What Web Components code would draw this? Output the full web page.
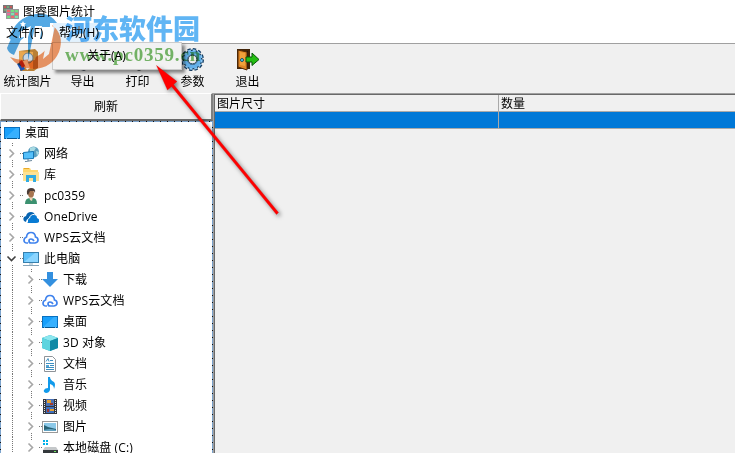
<!DOCTYPE html>
<html lang="zh-CN">
<head>
<meta charset="utf-8">
<title>图睿图片统计</title>
<style>
  html, body { margin: 0; height: 100%; overflow: hidden; background: #f0f0f0; }
</style>
</head>
<body>
<stat-app></stat-app>
<script>
const ICONS = {
  desktop: `<rect x=".5" y="2.500" width="15" height="11" fill="#18a0fb" stroke="#0870c0"/><path d="M1 13L12 3h3v10z" fill="#36b0ff"/><path d="M1 13.500h14" stroke="#075891"/><path d="M2 13.500h1M13 13.500h1" stroke="#6fb8ee"/>`,
  network: `<circle cx="10.500" cy="6" r="5.500" fill="#5c9fbe"/><path d="M7 2q4-2 6 0l-2 3-4 1zM13 5l3 1-2 4z" fill="#a8dbe3"/><path d="M.5 6.500l10-1v7l-10 .5z" fill="#55c0fa" stroke="#1677b5"/><path d="M5 13v2M2 15.500l7-1" stroke="#6e8ba0" stroke-width="1.200"/>`,
  library: `<path d="M0 1h7l1 2h7v10H0z" fill="#ffd76e"/><path d="M1 1.500h5" stroke="#e8a92e"/><path d="M0 5h16v9H0z" fill="#ffe292"/><path d="M3 15V8h10v7h-3v-4H6v4z" fill="#32ace2"/>`,
  user: `<path d="M2 16q0-6 5-6h3q4 0 4 6z" fill="#3c9170"/><path d="M6 9h4l-1 4-2-1z" fill="#ead2b5"/><ellipse cx="8" cy="5.500" rx="3" ry="4" fill="#a77550"/><path d="M4 6q-1-6 4-6 5 0 4 5l-1-2-4 0-2 4z" fill="#4b3c36"/>`,
  onedrive: `<path d="M1 12q-2-4 2-5 1-4 5-4 3 0 4 3-5-1-6 4-3 0-3 3z" fill="#0864b1"/><path d="M5 14q-3-3 1-5 1-4 5-3 3 0 3 3 3 1 2 4-1 1-3 1z" fill="#087bd3"/><path d="M4.500 13q-1-3 2-4 1-4 5-3.500" fill="none" stroke="#fff"/>`,
  cloud: `<path d="M5 13H4q-3 0-3-3 0-2 2.500-3Q4 2.500 8 2.500T12.500 7q2.500.500 2.500 3t-3 3H8q-2 0-2-2t2-2q2 0 3 2" fill="none" stroke="#3f82ed" stroke-width="1.700"/>`,
  pc: `<rect x=".5" y="1.500" width="15" height="10" fill="#5dc1fa" stroke="#377fac"/><path d="M1 11L12 2h3v9z" fill="#8bd5ff"/><path d="M6 12h4v2H6z" fill="#c4d5df"/><path d="M0 14.500h16" stroke="#86a4b8"/>`,
  download: `<path d="M5 0h6v7h5l-8 8-8-8h5z" fill="#3390df"/>`,
  cube: `<path d="M8 0l8 3v10l-8 3-8-3V3z" fill="#24a6bd"/><path d="M8 0l8 3-8 3-8-3z" fill="#8ce7ef"/><path d="M0 3l8 3v10l-8-3z" fill="#5fd4df"/><path d="M8 6l8-3v10l-8 3z" fill="#118aa6"/>`,
  doc: `<path d="M2.500.500h8l3 3v12h-11z" fill="#fff" stroke="#8e9398"/><path d="M4 5.500l2-3 1 3M8 4.500h3M4 7.500h8M8 9.500h4M4 11.500h8M4 13.500h8" fill="none" stroke="#3c8fc1"/><path d="M4 9h3v2H4z" fill="#51a5d6"/>`,
  music: `<path d="M6 0h2q0 3 4 5 2 2 0 7 0-4-4-5v6q-1 3-4 3-3-1-2-3 1-2 4-2z" fill="#119aeb"/>`,
  video: `<path d="M1 1h14v15H1z" fill="#33373e"/><path d="M4 1h8v7H4z" fill="#4a72b7"/><path d="M4 9h8v6H4z" fill="#3d70bf"/><path d="M5 2h4v3H5zM8 11h4v2H8z" fill="#e3a133"/><path d="M8 5h3v2H8zM5 11h2v3H5z" fill="#a23b2d"/><path d="M2.500 2v14M13.500 2v14" stroke="#e4e4e4" stroke-dasharray="1 1"/>`,
  picture: `<rect x=".5" y="2.500" width="15" height="11" fill="#fff" stroke="#999"/><path d="M2 4h12v8H2z" fill="#8cc9e9"/><path d="M2 6l4 2 8 2v2H2z" fill="#286376"/><path d="M2 11q6-2 12 0v1H2z" fill="#63a3c2"/>`,
  disk: `<path d="M1 0h2v2H1zM4 0h2v2H4zM1 3h2v2H1zM4 3h2v2H4z" fill="#00b1e9"/><path d="M3 7h11l2 3H1z" fill="#c5c8ca"/><path d="M1 10h15v4H1z" fill="#33383b"/><path d="M12 11h2v1h-2z" fill="#6ee65d"/>`,
  app: `<path d="M0 1h10v8H0z" fill="#777"/><path d="M1 2h2v2H1zM7 2h2v2H7z" fill="#c55b5b"/><path d="M4 2h2v2H4zM1 5h2v2H1z" fill="#72a878"/><path d="M3 5h13v10H3z" fill="#999"/><path d="M4 6h3v2H4zM12 9h3v2h-3zM8 12h3v2H8z" fill="#ee6c6c"/><path d="M8 6h3v2H8zM4 12h3v2H4zM12 6h3v2h-3z" fill="#75df83"/><path d="M8 9h3v2H8zM12 12h3v2h-3z" fill="#7ae3ad"/><path d="M4 9h3v2H4z" fill="#e0709c"/>`
};

const TOOLS = {
  stat: `<path d="M3 3l16-2 3 3v16l-4 3H4z" fill="#b98036"/><path d="M3 3l14 1v17L4 20z" fill="#e9a74e"/><circle cx="12" cy="10" r="5" fill="#c7d7e5" stroke="#6d7b87"/><path d="M1 16l4-2 4 7-4 2z" fill="#1955bb"/><path d="M7 13l4-1 3 8-3 2z" fill="#f3f3f3"/><path d="M3 14l3-2 3 6-3 2z" fill="#ba3022"/>`,
  export: `<path d="M7 8h10v13l-4 2-6-2z" fill="#515b67"/>`,
  print: `<path d="M6 8h12v13l-5 2-7-3z" fill="#4c5054"/>`,
  gear: `<circle cx="11.500" cy="11.500" r="10" fill="none" stroke="#153c60" stroke-width="3" stroke-dasharray="3.200 2.035"/><circle cx="11.500" cy="11.500" r="7.500" fill="none" stroke="#123958" stroke-width="5"/><circle cx="11.500" cy="11.500" r="9.200" fill="none" stroke="#8ac8f5" stroke-width="2" stroke-dasharray="2.900 1.917"/><circle cx="11.500" cy="11.500" r="7" fill="none" stroke="#63b0ea" stroke-width="3.400"/><circle cx="11.500" cy="11.500" r="4.400" fill="#eee" stroke="#183b5b"/>`,
  exit: `<path d="M1 1h13v20H1z" fill="#422509"/><path d="M3 3h9v17H3z" fill="#21160d"/><path d="M2 2l9 2v18l-9-3z" fill="#df8726" stroke="#552b07"/><path d="M4 4l5 1v13l-5-1z" fill="#f0a23b"/><circle cx="6" cy="12" r="1.500" fill="#5be2ff" stroke="#174a64"/><path d="M10 9h6V5l7 6.500-7 6V14h-6z" fill="#24bd12" stroke="#075708"/>`
};

class AppIcon extends HTMLElement {
  constructor() {
    super();
    const shadow = this.attachShadow({ mode: 'open' });
    const name = this.getAttribute('name');
    const large = name in TOOLS;
    const size = large ? 24 : 16;
    shadow.innerHTML = `
      <style>
        :host { display: block; flex: none; width: ${size}px; height: ${size}px; }
        svg { display: block; }
      </style>
      <svg width="${size}" height="${size}" viewBox="0 0 ${size} ${size}">${large ? TOOLS[name] : ICONS[name]}</svg>
    `;
  }
}

class ToolButton extends HTMLElement {
  constructor() {
    super();
    const shadow = this.attachShadow({ mode: 'open' });
    shadow.innerHTML = `
      <style>
        :host { display: flex; flex-direction: column; align-items: center; width: 55px; padding-top: 4px; }
        span { line-height: 18px; margin-top: 1px; white-space: nowrap; }
      </style>
      <app-icon name="${this.getAttribute('icon')}"></app-icon>
      <span><slot></slot></span>
    `;
  }
}

class TreeItem extends HTMLElement {
  constructor() {
    super();
    const shadow = this.attachShadow({ mode: 'open' });
    const level = Number(this.getAttribute('level') || 0);
    const chevron = this.hasAttribute('open')
      ? '<path d="M3.500 5.500l4 4 4-4" stroke="#404040"/>'
      : '<path d="M5.500 3.500l4 4-4 4" stroke="#a6a6a6"/>';
    shadow.innerHTML = `
      <style>
        :host { display: flex; align-items: center; height: 21px; }
        .guide { flex: none; width: 19px; height: 21px; background: repeating-linear-gradient(#777 0 1px, transparent 1px 2px) 8px 0 / 1px 21px no-repeat; }
        .branch { display: block; flex: none; width: 19px; height: 21px; }
        .label { margin-left: 5px; line-height: 21px; white-space: nowrap; }
      </style>
      ${level === 2 ? '<span class="guide"></span>' : ''}
      ${level ? `<svg class="branch" viewBox="0 -3 19 21" fill="none"><g stroke-width="1.600">${chevron}</g><path d="M8.500-3v4M8.500 14v4M16 7.500h3" stroke="#777" stroke-dasharray="1 1"/></svg>` : ''}
      <app-icon name="${this.getAttribute('icon')}"></app-icon>
      <span class="label"><slot></slot></span>
    `;
  }
}

class MenuPopup extends HTMLElement {
  constructor() {
    super();
    const shadow = this.attachShadow({ mode: 'open' });
    shadow.innerHTML = `
      <style>
        :host { display: block; box-sizing: border-box; width: 130px; height: 28px; padding-left: 34px; line-height: 26px; background: #f2f2f2; border: 1px solid #ccc; box-shadow: 3px 3px 3px rgba(0,0,0,.45); }
      </style>
      <slot></slot>
    `;
  }
}

class StatTable extends HTMLElement {
  constructor() {
    super();
    const shadow = this.attachShadow({ mode: 'open' });
    shadow.innerHTML = `
      <style>
        :host { display: block; box-sizing: border-box; border-top: 1px solid #a0a0a0; border-left: 1px solid #a0a0a0; background: #f0f0f0; }
        .inner { height: 100%; border-top: 1px solid #696969; border-left: 1px solid #696969; }
        .row { display: grid; grid-template-columns: 284px 1fr; height: 16px; border-bottom: 1px solid #a9a9a9; }
        .row > div { padding-left: 2px; line-height: 17px; }
        .row > div:first-child { box-sizing: border-box; border-right: 1px solid #a9a9a9; }
        .selected { background: #0078d7; }
      </style>
      <div class="inner">
        <div class="row"><div>图片尺寸</div><div>数量</div></div>
        <div class="row selected"><div></div><div></div></div>
      </div>
    `;
  }
}

// Multiplied over the window, so the menu texts stay readable under it
class SiteMark extends HTMLElement {
  constructor() {
    super();
    const shadow = this.attachShadow({ mode: 'open' });
    shadow.innerHTML = `
      <style>
        :host { display: grid; grid-template-columns: 59px auto; width: 205px; height: 60px; pointer-events: none; mix-blend-mode: multiply; }
        svg { display: block; overflow: visible; }
        .name { font: 900 27px/32px "Noto Sans CJK SC", sans-serif; color: #60b5f4; white-space: nowrap; }
        .site { font: bold 19px/20px "Liberation Serif", serif; color: #78bb6a; white-space: nowrap; letter-spacing: .8px; margin-top: 1px; }
      </style>
      <svg width="59" height="60" viewBox="0 0 59 60">
        <path d="M3 26Q10 5 30 2 44 0 51 11L44 11 44 15 36 15V31H28V51H22V23L9 32z" fill="#55a9e4"/>
        <path d="M1 36Q5 22 22 12L8 43Q2 41 1 36z" fill="#55a9e4"/>
        <path d="M46 13Q59 23 53 40 46 56 28 57 13 57 4 45 20 52 35 42 49 32 46 13z" fill="#f39a68"/>
        <path d="M15 19l10-5-8 30-6 1 7-20-5 1zM29 14h7l-2 13h7l2-12 6-1-6 28-6 5 3-15h-7l-4 16-7 1z" fill="#fff"/>
        <path d="M17 9l1 2 2 .3-1.500 1.500.5 2.200-2-1-2 1 .5-2.200L14 11.300l2-.3z" fill="#fff"/>
      </svg>
      <div>
        <div class="name">河东软件园</div>
        <div class="site">www.pc0359.cn</div>
      </div>
    `;
  }
}

class StatApp extends HTMLElement {
  constructor() {
    super();
    const shadow = this.attachShadow({ mode: 'open' });
    shadow.innerHTML = `
      <style>
        :host { display: flex; flex-direction: column; position: relative; height: 453px; overflow: hidden; background: #f0f0f0; color: #000; font: 12px "Open Sans", "Noto Sans CJK SC", sans-serif; }
        .title { display: flex; align-items: center; gap: 4px; height: 23px; padding-left: 3px; background: #fff; box-sizing: border-box; }
        .title span { line-height: 23px; }
        .menu { display: flex; height: 21px; background: #fff; line-height: 20px; border-bottom: 1px solid #a0a0a0; box-sizing: border-box; }
        .menu span { box-sizing: border-box; width: 53px; padding-left: 6px; white-space: nowrap; }
        .menu .active { width: 47px; background: #e2f1fd; }
        .tools { display: flex; height: 49px; box-sizing: border-box; }
        .main { display: grid; grid-template-columns: 213px 1fr; flex: 1; min-height: 0; }
        .side { display: flex; flex-direction: column; min-height: 0; }
        .refresh { box-sizing: border-box; height: 28px; line-height: 26px; text-align: center; border-top: 1px solid #fff; border-left: 1px solid #fff; border-right: 2px solid #808080; border-bottom: 2px solid #696969; }
        .tree { flex: 1; overflow: hidden; box-sizing: border-box; padding: 1px 0 0 4px; letter-spacing: .1px; background:
          repeating-linear-gradient(90deg, #7ca3cc 0 6px, #111 6px 7px) 0 0 / 100% 1px no-repeat,
          repeating-linear-gradient(#7ca3cc 0 6px, #111 6px 7px) 0 0 / 1px 100% no-repeat,
          repeating-linear-gradient(#7ca3cc 0 6px, #111 6px 7px) 100% 0 / 1px 100% no-repeat, #fff; }
        menu-popup { position: absolute; left: 52px; top: 42px; }
        site-mark { position: absolute; left: 6px; top: 12px; }
        .arrow { position: absolute; left: 150px; top: 58px; filter: drop-shadow(2px 2px 2px rgba(0,0,0,.5)); }
      </style>
      <div class="title"><app-icon name="app"></app-icon><span>图睿图片统计</span></div>
      <div class="menu"><span>文件(F)</span><span class="active">帮助(H)</span></div>
      <div class="tools">
        <tool-button icon="stat">统计图片</tool-button>
        <tool-button icon="export">导出</tool-button>
        <tool-button icon="print">打印</tool-button>
        <tool-button icon="gear">参数</tool-button>
        <tool-button icon="exit">退出</tool-button>
      </div>
      <div class="main">
        <div class="side">
          <div class="refresh">刷新</div>
          <div class="tree">
            <tree-item icon="desktop">桌面</tree-item>
            <tree-item level="1" icon="network">网络</tree-item>
            <tree-item level="1" icon="library">库</tree-item>
            <tree-item level="1" icon="user">pc0359</tree-item>
            <tree-item level="1" icon="onedrive">OneDrive</tree-item>
            <tree-item level="1" icon="cloud">WPS云文档</tree-item>
            <tree-item level="1" icon="pc" open>此电脑</tree-item>
            <tree-item level="2" icon="download">下载</tree-item>
            <tree-item level="2" icon="cloud">WPS云文档</tree-item>
            <tree-item level="2" icon="desktop">桌面</tree-item>
            <tree-item level="2" icon="cube">3D 对象</tree-item>
            <tree-item level="2" icon="doc">文档</tree-item>
            <tree-item level="2" icon="music">音乐</tree-item>
            <tree-item level="2" icon="video">视频</tree-item>
            <tree-item level="2" icon="picture">图片</tree-item>
            <tree-item level="2" icon="disk">本地磁盘 (C:)</tree-item>
          </div>
        </div>
        <stat-table></stat-table>
      </div>
      <menu-popup>关于(A)</menu-popup>
      <site-mark></site-mark>
      <svg class="arrow" width="140" height="165" viewBox="150 58 140 165">
        <path d="M156.500 65.500L177 81.500 173.500 84.500 278.500 212.500 276.500 214.500 171.500 86.500 167.500 90z" fill="#f00" stroke="#d00000" stroke-width=".3"/>
      </svg>
    `;
  }
}

customElements.define('app-icon', AppIcon);
customElements.define('tool-button', ToolButton);
customElements.define('tree-item', TreeItem);
customElements.define('menu-popup', MenuPopup);
customElements.define('stat-table', StatTable);
customElements.define('site-mark', SiteMark);
customElements.define('stat-app', StatApp);
</script>
</body>
</html>
